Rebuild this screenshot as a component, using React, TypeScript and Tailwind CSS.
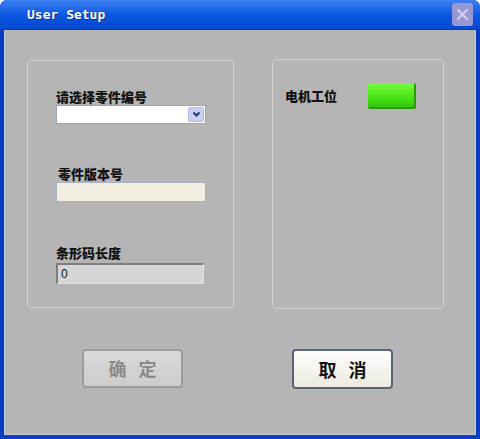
export default function App() {
  const cjk = "font-['Noto_Sans_CJK_SC','Noto_Sans',sans-serif]";
  return (
    <div className="w-[480px] h-[439px] bg-[#0a3ec0] rounded-t-[7px] flex flex-col overflow-hidden">
      {/* title bar */}
      <div className="h-[30px] shrink-0 flex items-center justify-between pl-[27px] pr-[7px] bg-gradient-to-b from-[#3d80f2] via-[#0b58e2] to-[#0648cf] border-b border-[#0a3aa8]">
        <span className="text-white font-bold text-[13px] font-['DejaVu_Sans_Mono',monospace] [text-shadow:1px_1px_0_#0a2e90] mt-[1px]">
          User Setup
        </span>
        <div className="w-[21px] h-[23px] rounded-[3px] bg-[#9898d2] flex items-center justify-center">
          <svg width="13" height="13" viewBox="0 0 13 13">
            <path d="M2 2 L11 11 M11 2 L2 11" stroke="#cfcfee" strokeWidth="2.2" strokeLinecap="round" />
          </svg>
        </div>
      </div>

      {/* body */}
      <div className="flex-1 mx-[4px] mb-[4px] bg-[#b5b5b5] border-l border-r border-b border-[#c9c9d9] flex flex-col">
        <div className="flex pl-[22px] pt-[30px] gap-[38px]">
          {/* left group */}
          <div className="w-[207px] h-[248px] rounded-[4px] border border-[#d2d2d2] flex flex-col pl-[28px] pt-[28px]">
            <div className={`${cjk} font-black text-[13px] leading-[15px] text-[#111]`}>请选择零件编号</div>
            <div className="mt-[1px] w-[150px] h-[19px] bg-white border border-[#9aa4bd] flex justify-end items-center pr-[1px]">
              <div className="w-[16px] h-[15px] rounded-[2px] bg-[#c7d0ee] border border-[#b0bbe0] flex items-center justify-center">
                <svg width="9" height="7" viewBox="0 0 9 7">
                  <path d="M1.5 1.5 L4.5 4.5 L7.5 1.5" stroke="#24347a" strokeWidth="2" fill="none" />
                </svg>
              </div>
            </div>

            <div className={`${cjk} font-black text-[13px] leading-[15px] text-[#111] mt-[42px] ml-[2px]`}>零件版本号</div>
            <div className="mt-[1px] w-[150px] h-[20px] bg-[#f1ede1] border border-[#a9b1c3]" />

            <div className={`${cjk} font-black text-[13px] leading-[15px] text-[#111] mt-[43px]`}>条形码长度</div>
            <div className="mt-[3px] w-[148px] h-[21px] bg-[#d6d6d6] border-t-2 border-l-2 border-[#7e7e7e] border-r border-b border-r-[#e2e2e2] border-b-[#e2e2e2] flex items-center pl-[3px]">
              <span className="font-['Liberation_Sans',sans-serif] text-[12px] text-[#111]">0</span>
            </div>
          </div>

          {/* right group */}
          <div className="w-[172px] h-[250px] -mt-[1px] rounded-[4px] border border-[#d2d2d2] flex items-start pl-[12px] pt-[23px]">
            <div className={`${cjk} font-black text-[13px] leading-[15px] text-[#111] mt-[5px]`}>电机工位</div>
            <div className="ml-[31px] w-[48px] h-[26px] rounded-[2px] bg-gradient-to-b from-[#78f83e] via-[#4ee81a] to-[#32c808] border-r-2 border-b-2 border-[#2c9a06]" />
          </div>
        </div>

        {/* buttons */}
        <div className="flex pl-[77px] pt-[40px] gap-[109px]">
          <div className={`w-[101px] h-[39px] rounded-[4px] border-2 border-[#9c9c9c] bg-gradient-to-b from-[#d9d9d9] to-[#cdcdcd] flex items-center justify-center ${cjk} text-[18px] font-bold text-[#8a8a8a] tracking-[12px] pl-[12px]`}>
            确定
          </div>
          <div className={`w-[101px] h-[40px] rounded-[4px] border-2 border-[#5a6275] bg-gradient-to-b from-[#ffffff] to-[#ece9e0] flex items-center justify-center ${cjk} text-[18px] font-bold text-[#111] tracking-[12px] pl-[12px]`}>
            取消
          </div>
        </div>
      </div>
    </div>
  );
}
